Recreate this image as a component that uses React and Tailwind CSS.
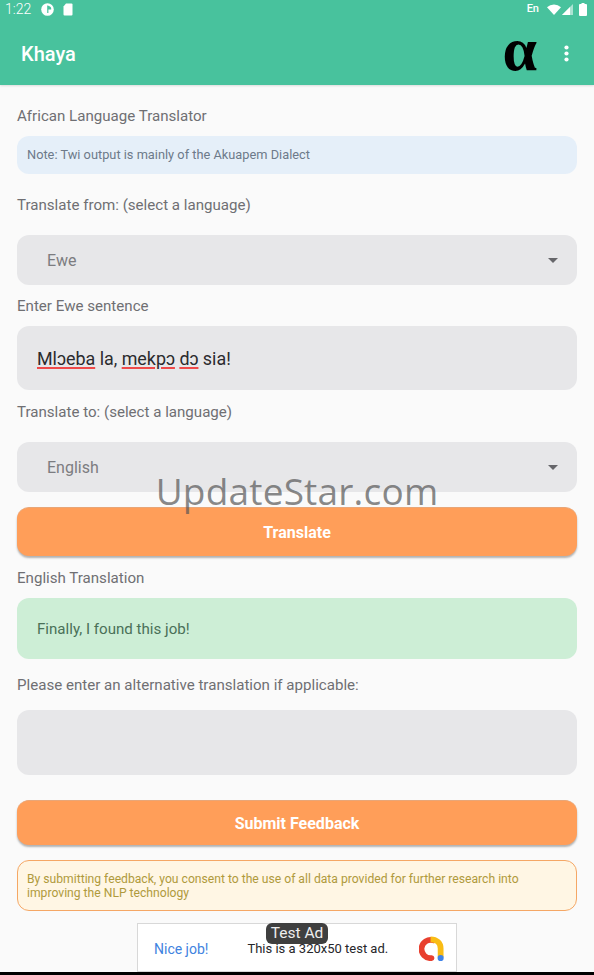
function Label({ children, className = '' }) {
  return <div className={`h-5 text-[15.1px] leading-5 text-[#6f6f73] ${className}`}>{children}</div>
}

function Select({ value, className = '' }) {
  return (
    <div className={`h-[50px] rounded-xl bg-[#e7e7e9] flex items-center justify-between pl-[30px] pr-[19px] ${className}`}>
      <span className="text-base text-[#7c7c80] mt-[2px]">{value}</span>
      <svg width="10" height="5" viewBox="0 0 10 5"><path d="M0 0h10L5 5z" fill="#66666a" /></svg>
    </div>
  )
}

function OrangeButton({ children, className = '' }) {
  return (
    <div className={`rounded-xl bg-[#ff9e59] border-t border-[#e8a678] shadow-[0_2px_2px_rgba(90,90,90,0.45)] flex items-center justify-center text-base font-bold text-white ${className}`}>
      <span className="mt-[1px]">{children}</span>
    </div>
  )
}

function Spell({ children }) {
  return <span className="underline decoration-[#ef4a4a] decoration-2 underline-offset-[2px]">{children}</span>
}

export default function App() {
  return (
    <div className="relative h-[975px] w-[594px] overflow-hidden bg-[#fafafa] font-['Roboto',sans-serif]">
      {/* app bar */}
      <div className="h-[85px] bg-[#48c29d] shadow-[0_1px_2px_rgba(0,0,0,0.12)] text-white">
        <div className="h-[18px] flex items-center justify-between pl-[5px] pr-[7px]">
          <div className="flex items-center">
            <span className="text-[14px] leading-[18px] font-light">1:22</span>
            <svg className="ml-[10px]" width="13" height="13" viewBox="0 0 13 13">
              <circle cx="6.5" cy="6.5" r="6.3" fill="#fff" />
              <path d="M6.2 2.5h1.2v0.5a3 3 0 0 1 2.8 3.5h-2.8v3.4h-1.2z" fill="#48c29d" />
            </svg>
            <svg className="ml-[9px]" width="10" height="13" viewBox="0 0 10 13">
              <path d="M3 .5h5.5a1 1 0 0 1 1 1v10a1 1 0 0 1-1 1h-7a1 1 0 0 1-1-1V3.5z" fill="#fff" />
            </svg>
          </div>
          <div className="flex items-center">
            <span className="text-[11px] font-medium leading-[18px]">En</span>
            <svg className="ml-[8px]" width="14" height="11" viewBox="0 0 14 11"><path d="M0 3.2a10.5 10.5 0 0 1 14 0L7 11z" fill="#fff" /></svg>
            <svg className="ml-[1px]" width="11" height="11" viewBox="0 0 11 11">
              <path d="M11 0v11H0z" fill="#fff" fillOpacity="0.55" />
              <path d="M8 3v8H0z" fill="#fff" />
            </svg>
            <svg className="ml-[6px]" width="8" height="13" viewBox="0 0 8 13"><path d="M2.5 0h3v1H7a1 1 0 0 1 1 1v10a1 1 0 0 1-1 1H1a1 1 0 0 1-1-1V2a1 1 0 0 1 1-1h1.5z" fill="#fff" /></svg>
          </div>
        </div>
        <div className="h-[67px] flex items-center pl-[21px]">
          <span className="text-[20px] font-medium mt-[5px]">Khaya</span>
          <span className="ml-auto mr-[27px] -mt-[6px] font-['Liberation_Serif',serif] text-[62px] leading-[54px] font-bold text-black">α</span>
          <svg className="mr-[25px] mt-[3px]" width="5" height="17" viewBox="0 0 5 17">
            <circle cx="2.5" cy="2.5" r="2.1" fill="#fff" />
            <circle cx="2.5" cy="8.5" r="2.1" fill="#fff" />
            <circle cx="2.5" cy="14.5" r="2.1" fill="#fff" />
          </svg>
        </div>
      </div>

      {/* form */}
      <div className="px-[17px] pt-[21px]">
        <Label>African Language Translator</Label>
        <div className="mt-[10px] h-[38px] rounded-xl bg-[#e5eff9] flex items-center pl-[10px] text-[12.8px] text-[#6d7a8a]">
          Note: Twi output is mainly of the Akuapem Dialect
        </div>

        <Label className="mt-[21px]">Translate from: (select a language)</Label>
        <Select value="Ewe" className="mt-[20px]" />

        <Label className="mt-[11px]">Enter Ewe sentence</Label>
        <div className="mt-[10px] h-[64px] rounded-xl bg-[#e7e7e9] flex items-center pl-5 text-[17.9px] text-[#2b2b2e]">
          <span className="mt-[2px]"><Spell>Mlɔeba</Spell> la, <Spell>mekpɔ</Spell> <Spell>dɔ</Spell> sia!</span>
        </div>

        <Label className="mt-[12px]">Translate to: (select a language)</Label>
        <Select value="English" className="mt-[20px]" />

        <OrangeButton className="mt-[15px] h-[49px]">Translate</OrangeButton>

        <Label className="mt-[12px]">English Translation</Label>
        <div className="mt-[10px] h-[61px] rounded-xl bg-[#cdeed6] flex items-center pl-5 text-[15.1px] text-[#4a7058]">
          <span className="mt-[1px]">Finally, I found this job!</span>
        </div>

        <Label className="mt-[16px]">Please enter an alternative translation if applicable:</Label>
        <div className="mt-[15px] h-[65px] rounded-xl bg-[#e7e7e9]" />

        <OrangeButton className="mt-[25px] h-[45px]">Submit Feedback</OrangeButton>

        <div className="mt-[15px] h-[51px] rounded-xl border border-[#f5a765] bg-[#fff6e4] flex items-center pl-[9px] pr-6 text-[12.15px] leading-[14px] text-[#b09a3c]">
          By submitting feedback, you consent to the use of all data provided for further research into improving the NLP technology
        </div>
      </div>

      {/* ad banner */}
      <div className="absolute left-[137px] top-[923px] h-[49px] w-[320px] border border-[#d8d8d8] bg-white flex items-center">
        <span className="ml-4 mt-[3px] text-[14px] text-[#3f83e0]">Nice job!</span>
        <span className="ml-[39px] mt-[3px] text-[13px] text-[#26262a]">This is a 320x50 test ad.</span>
        <svg className="ml-auto mr-[12px] mt-[1px]" width="25" height="25" viewBox="0 0 26 26">
          <path d="M15 4.5A9.5 9.5 0 1 0 13 23" fill="none" stroke="#e8402f" strokeWidth="6" strokeLinecap="round" />
          <path d="M12 3.5c6.5 0 10.5 4 10.5 9.5v9" fill="none" stroke="#f9bc15" strokeWidth="6" />
          <circle cx="22.5" cy="23" r="3.2" fill="#3f83e8" />
        </svg>
      </div>
      <div className="absolute left-[266px] top-[923px] h-[21px] w-[62px] rounded-md bg-[#3f3f3f] flex items-center justify-center text-[15.5px] text-[#eee]">
        Test Ad
      </div>
      <div className="absolute left-0 bottom-0 h-[3px] w-full bg-black" />

      {/* watermark */}
      <div className="absolute left-0 top-[465px] w-full text-center text-[37px] leading-[52px] tracking-[0.2px] font-['Open_Sans',sans-serif] text-[#555]/70">
        UpdateStar.com
      </div>
    </div>
  )
}
